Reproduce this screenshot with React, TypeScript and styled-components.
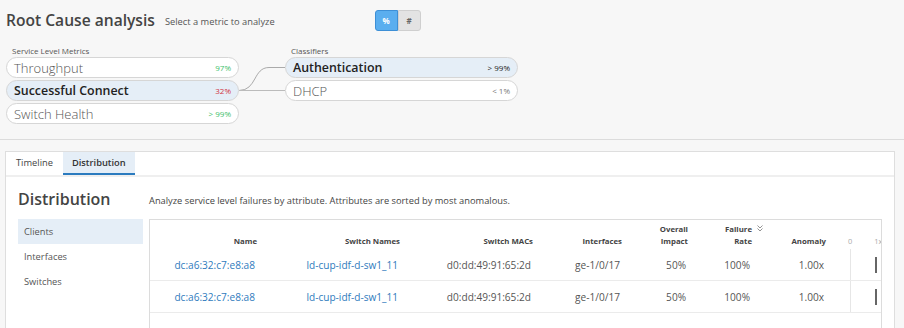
import React from "react";
import styled, { createGlobalStyle } from "styled-components";

const Global = createGlobalStyle`
  html, body { margin: 0; padding: 0; }
  body {
    background: #f7f7f7;
    font-family: "Open Sans", "DejaVu Sans", sans-serif;
    color: #444;
  }
`;

const Page = styled.div`
  width: 904px;
  height: 328px;
  overflow: hidden;
`;

const Header = styled.section`
  height: 140px;
  box-sizing: border-box;
  border-bottom: 1px solid #dcdcdc;
  padding: 6px 6px 0 6px;
`;

const TitleRow = styled.div`
  display: flex;
  align-items: center;
  height: 28px;
`;

const Title = styled.h1`
  margin: 0;
  font-size: 15.6px;
  font-weight: 600;
  color: #444;
`;

const Subtitle = styled.span`
  margin-left: 10px;
  font-size: 9.3px;
  color: #555;
  padding-top: 3px;
`;

const Toggle = styled.div`
  display: flex;
  margin-left: 100px;
`;

const ToggleButton = styled.button<{ $active?: boolean }>`
  width: 23px;
  height: 21px;
  padding: 0;
  font-family: inherit;
  font-size: 8px;
  font-weight: 700;
  border: 1px solid ${(p) => (p.$active ? "#3d8fd6" : "#cfcfcf")};
  border-radius: ${(p) => (p.$active ? "3px 0 0 3px" : "0 3px 3px 0")};
  background: ${(p) => (p.$active ? "#5aaeef" : "#e3e3e3")};
  color: ${(p) => (p.$active ? "#fff" : "#666")};
`;

const Metrics = styled.div`
  display: flex;
  margin-top: 11px;
`;

const Column = styled.div`
  width: 233px;
  display: flex;
  flex-direction: column;
`;

const ColumnLabel = styled.div`
  font-size: 8px;
  color: #555;
  height: 12px;
  line-height: 12px;
  padding-left: 6px;
`;

const Pill = styled.div<{ $selected?: boolean }>`
  box-sizing: border-box;
  height: 21px;
  margin-bottom: 2px;
  border: 1px solid #d6d6d6;
  border-radius: 11px;
  background: ${(p) => (p.$selected ? "#e5eef7" : "#fff")};
  display: flex;
  align-items: center;
  justify-content: space-between;
  padding: 0 7px 0 7px;
`;

const PillName = styled.span<{ $selected?: boolean }>`
  font-size: ${(p) => (p.$selected ? "12.4px" : "13px")};
  font-weight: ${(p) => (p.$selected ? 600 : 300)};
  color: ${(p) => (p.$selected ? "#222" : "#555")};
`;

const PillValue = styled.span<{ $tone: "green" | "red" | "dark" | "gray" }>`
  font-size: 8px;
  color: ${(p) =>
    p.$tone === "green" ? "#3cc06a" : p.$tone === "red" ? "#d0333f" : p.$tone === "dark" ? "#222" : "#777"};
`;

const Connector = styled.svg`
  width: 46px;
  flex: none;
`;

const Lower = styled.section`
  padding: 11px 9px 0 5px;
`;

const Card = styled.div`
  background: #fff;
  border: 1px solid #dedede;
  height: 200px;
`;

const Tabs = styled.div`
  display: flex;
  height: 23px;
  border-bottom: 2px solid #efefef;
`;

const Tab = styled.div<{ $active?: boolean }>`
  box-sizing: border-box;
  padding: 0 ${(p) => (p.$active ? 9 : 10)}px;
  display: flex;
  align-items: center;
  font-size: 9.3px;
  font-weight: ${(p) => (p.$active ? 600 : 400)};
  color: ${(p) => (p.$active ? "#333" : "#444")};
  background: ${(p) => (p.$active ? "#e5eef7" : "transparent")};
  border-bottom: 2px solid ${(p) => (p.$active ? "#2b7bbf" : "transparent")};
`;

const Body = styled.div`
  display: flex;
  padding: 0 12px 0 12px;
`;

const Side = styled.div`
  width: 125px;
  flex: none;
  margin-right: 6px;
`;

const SideTitle = styled.h2`
  margin: 0;
  height: 42px;
  line-height: 44px;
  font-size: 16px;
  font-weight: 600;
  color: #444;
`;

const NavItem = styled.div<{ $active?: boolean }>`
  height: 25px;
  line-height: 25px;
  padding-left: 6px;
  font-size: 9.3px;
  color: #555;
  background: ${(p) => (p.$active ? "#e5eef7" : "transparent")};
`;

const Main = styled.div`
  flex: 1;
  min-width: 0;
`;

const Description = styled.div`
  height: 42px;
  line-height: 48px;
  font-size: 9.3px;
  color: #444;
`;

const TableBox = styled.div`
  border: 1px solid #dcdcdc;
  height: 140px;
  overflow: hidden;
`;

const COLS = "107px 143px 133px 89px 66px 64px 74px 60px";

const HeadRow = styled.div`
  display: grid;
  grid-template-columns: ${COLS};
  height: 29px;
  align-items: end;
`;

const HeadCell = styled.div`
  text-align: right;
  font-size: 7.8px;
  font-weight: 700;
  color: #444;
  line-height: 12px;
  padding-bottom: 2px;
`;

const SortMark = styled.span`
  position: relative;
`;

const SortIcon = styled.svg`
  position: absolute;
  left: calc(100% + 5px);
  top: 1px;
  width: 6px;
  height: 7px;
`;

const Scale = styled.div`
  display: flex;
  font-size: 7.5px;
  color: #aaa;
  padding: 0 0 2px 0;
  line-height: 12px;
  align-self: end;
`;

const ScaleTick = styled.span<{ $left: number }>`
  margin-left: ${(p) => p.$left}px;
`;

const Row = styled.div`
  display: grid;
  grid-template-columns: ${COLS};
  height: 31px;
  align-items: center;
  border-bottom: 1px solid #ebebeb;
`;

const Cell = styled.div<{ $link?: boolean }>`
  text-align: right;
  font-size: 10.1px;
  color: ${(p) => (p.$link ? "#2f7bbd" : "#555")};
  padding-right: 2px;
`;

const BarCell = styled.div`
  align-self: stretch;
  display: flex;
  align-items: center;
  margin-left: 24px;
  border-left: 1px solid #e6e6e6;
`;

const Bar = styled.div`
  margin-left: 24px;
  width: 2px;
  height: 16px;
  background: #666;
`;

const rows = [
  { name: "dc:a6:32:c7:e8:a8", sw: "ld-cup-idf-d-sw1_11", mac: "d0:dd:49:91:65:2d", intf: "ge-1/0/17", impact: "50%", rate: "100%", anomaly: "1.00x" },
  { name: "dc:a6:32:c7:e8:a8", sw: "ld-cup-idf-d-sw1_11", mac: "d0:dd:49:91:65:2d", intf: "ge-1/0/17", impact: "50%", rate: "100%", anomaly: "1.00x" },
];

export default function App() {
  return (
    <Page>
      <Global />
      <Header>
        <TitleRow>
          <Title>Root Cause analysis</Title>
          <Subtitle>Select a metric to analyze</Subtitle>
          <Toggle>
            <ToggleButton $active>%</ToggleButton>
            <ToggleButton>#</ToggleButton>
          </Toggle>
        </TitleRow>
        <Metrics>
          <Column>
            <ColumnLabel>Service Level Metrics</ColumnLabel>
            <Pill>
              <PillName>Throughput</PillName>
              <PillValue $tone="green">97%</PillValue>
            </Pill>
            <Pill $selected>
              <PillName $selected>Successful Connect</PillName>
              <PillValue $tone="red">32%</PillValue>
            </Pill>
            <Pill>
              <PillName>Switch Health</PillName>
              <PillValue $tone="green">&gt; 99%</PillValue>
            </Pill>
          </Column>
          <Connector viewBox="0 0 46 80" height="80">
            <path d="M0 45.5 C 18 45.5, 14 22.5, 30 22.5 L 46 22.5" fill="none" stroke="#aaa" strokeWidth="1" />
            <path d="M0 45.5 L 46 45.5" fill="none" stroke="#bbb" strokeWidth="1" />
          </Connector>
          <Column>
            <ColumnLabel>Classifiers</ColumnLabel>
            <Pill $selected>
              <PillName $selected>Authentication</PillName>
              <PillValue $tone="dark">&gt; 99%</PillValue>
            </Pill>
            <Pill>
              <PillName>DHCP</PillName>
              <PillValue $tone="gray">&lt; 1%</PillValue>
            </Pill>
          </Column>
        </Metrics>
      </Header>
      <Lower>
        <Card>
          <Tabs>
            <Tab>Timeline</Tab>
            <Tab $active>Distribution</Tab>
          </Tabs>
          <Body>
            <Side>
              <SideTitle>Distribution</SideTitle>
              <NavItem $active>Clients</NavItem>
              <NavItem>Interfaces</NavItem>
              <NavItem>Switches</NavItem>
            </Side>
            <Main>
              <Description>
                Analyze service level failures by attribute. Attributes are sorted by most anomalous.
              </Description>
              <TableBox>
                <HeadRow>
                  <HeadCell>Name</HeadCell>
                  <HeadCell>Switch Names</HeadCell>
                  <HeadCell>Switch MACs</HeadCell>
                  <HeadCell>Interfaces</HeadCell>
                  <HeadCell>
                    Overall
                    <br />
                    Impact
                  </HeadCell>
                  <HeadCell>
                    <SortMark>
                      Failure
                      <SortIcon viewBox="0 0 6 7">
                        <path d="M0.5 0.5 L3 3 L5.5 0.5 M0.5 3.5 L3 6 L5.5 3.5" fill="none" stroke="#777" strokeWidth="0.8" />
                      </SortIcon>
                    </SortMark>
                    <br />
                    Rate
                  </HeadCell>
                  <HeadCell>Anomaly</HeadCell>
                  <Scale>
                    <ScaleTick $left={22}>0</ScaleTick>
                    <ScaleTick $left={22}>1x</ScaleTick>
                  </Scale>
                </HeadRow>
                {rows.map((r, i) => (
                  <Row key={i}>
                    <Cell $link>{r.name}</Cell>
                    <Cell $link>{r.sw}</Cell>
                    <Cell>{r.mac}</Cell>
                    <Cell>{r.intf}</Cell>
                    <Cell>{r.impact}</Cell>
                    <Cell>{r.rate}</Cell>
                    <Cell>{r.anomaly}</Cell>
                    <BarCell>
                      <Bar />
                    </BarCell>
                  </Row>
                ))}
              </TableBox>
            </Main>
          </Body>
        </Card>
      </Lower>
    </Page>
  );
}
